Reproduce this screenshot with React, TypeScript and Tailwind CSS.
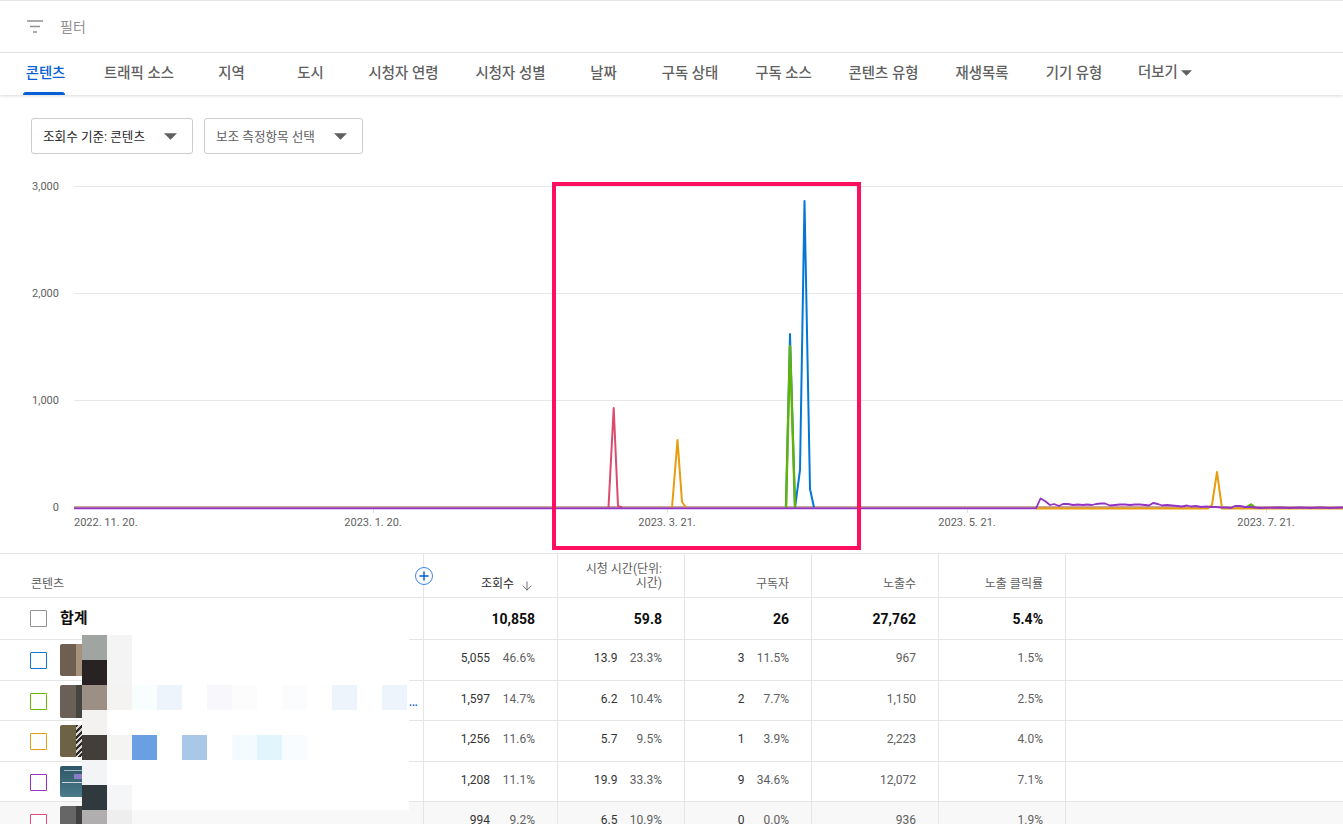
import { ArrowDown, Plus } from 'lucide-react';

const cjk = "font-['Roboto','Noto_Sans_CJK_KR',sans-serif]";

const tabs = [
  { label: '콘텐츠', width: 'w-[86px]' },
  { label: '트래픽 소스', width: 'w-[106px]' },
  { label: '지역', width: 'w-[79px]' },
  { label: '도시', width: 'w-[79px]' },
  { label: '시청자 연령', width: 'w-[107px]' },
  { label: '시청자 성별', width: 'w-[107px]' },
  { label: '날짜', width: 'w-[79px]' },
  { label: '구독 상태', width: 'w-[94px]' },
  { label: '구독 소스', width: 'w-[93px]' },
  { label: '콘텐츠 유형', width: 'w-[107px]' },
  { label: '재생목록', width: 'w-[90px]' },
  { label: '기기 유형', width: 'w-[94px]' },
];

const rows = [
  { h: 'h-[40px]', check: 'border-[#0f78d4]', thumb: 'bg-[#6e5f50]', thumb2: 'bg-[#a8917a]', thumbH: 'h-[32px]', v: ['5,055', '46.6%', '13.9', '23.3%', '3', '11.5%', '967', '1.5%'] },
  { h: 'h-[39px]', check: 'border-[#6cb800]', thumb: 'bg-[#6a6058]', thumb2: 'bg-[#45443f]', thumbH: 'h-[33px]', v: ['1,597', '14.7%', '6.2', '10.4%', '2', '7.7%', '1,150', '2.5%'] },
  { h: 'h-[40px]', check: 'border-[#e89a10]', thumb: 'bg-[#6d6244]', thumb2: 'bg-[repeating-linear-gradient(135deg,#2a2a2a_0_2px,#d8d4cc_2px_4px)]', thumbH: 'h-[32px]', v: ['1,256', '11.6%', '5.7', '9.5%', '1', '3.9%', '2,223', '4.0%'] },
  { h: 'h-[39px]', check: 'border-[#9b30c0]', thumb: 'bg-linear-to-b from-[#2f5666] to-[#4a7c8c]', thumb2: 'bg-linear-to-b from-[#2f5666] to-[#4a7c8c]', thumbH: 'h-[31px]', detail: true, v: ['1,208', '11.1%', '19.9', '33.3%', '9', '34.6%', '12,072', '7.1%'] },
  { h: 'h-[40px]', check: 'border-[#e0497a]', thumb: 'bg-[#666666]', thumb2: 'bg-[#414141]', thumbH: 'h-[32px]', v: ['994', '9.2%', '6.5', '10.9%', '0', '0.0%', '936', '1.9%'], hover: true },
];

// blur mosaic over the private titles, 13 x 8 blocks of 25px
const mosaic: Record<string, string> = {
  '0,0': '#a0a5a2', '1,0': '#282322', '2,0': '#9c8f86', '3,0': '#f3f2f0', '4,0': '#443e38', '5,0': '#f3f4f6', '6,0': '#303a3e', '7,0': '#b0aeaf',
  '0,1': '#f4f4f4', '1,1': '#f4f4f4', '2,1': '#f4f3f1', '4,1': '#f4f4f2', '6,1': '#f5f6f8', '7,1': '#eeeeee',
  '2,2': '#f8fdfe', '2,3': '#edf4fc', '2,5': '#f7f7fc', '2,6': '#fcfcfc', '2,8': '#fafcfe', '2,10': '#edf4fc', '2,12': '#edf4fc',
  '4,2': '#6b9fe3', '4,4': '#a9c8e8', '4,6': '#f4fbfe', '4,7': '#e1f5fc', '4,8': '#f9fcfe',
};

function Caret({ className }: { className: string }) {
  return (
    <svg viewBox="0 0 14 7" className={className}>
      <path d="M0 0h14L7 7z" fill="currentColor" />
    </svg>
  );
}

function Select({ label, width, text }: { label: string; width: string; text: string }) {
  return (
    <div className={`${width} h-9 flex items-center justify-between pl-[11px] pr-[15px] border border-[#cccccc] rounded-[3px] text-[12.6px] ${text}`}>
      <span className="pt-[2px]">{label}</span>
      <Caret className="w-[13px] h-[7px] text-[#606060]" />
    </div>
  );
}

function Chart() {
  const grid = [186, 293, 400, 507];
  const yLabels = ['3,000', '2,000', '1,000', '0'];
  const xLabels = [
    { x: 667, t: '2023. 3. 21.' },
    { x: 373, t: '2023. 1. 20.' },
    { x: 967, t: '2023. 5. 21.' },
    { x: 1266, t: '2023. 7. 21.' },
  ];
  return (
    <svg width="1343" height="373" viewBox="0 180 1343 373" className="block" fontFamily="Roboto, sans-serif" fontSize="11" fill="#606060">
      {grid.map((y, i) => (
        <g key={y}>
          <line x1="74" x2="1343" y1={y + 0.5} y2={y + 0.5} stroke="#e8e8e8" />
          <text x="59" y={y + 4} textAnchor="end">{yLabels[i]}</text>
        </g>
      ))}
      <text x="74" y="526">2022. 11. 20.</text>
      {xLabels.map((l) => (
        <g key={l.x}>
          <line x1={l.x + 0.5} x2={l.x + 0.5} y1="508" y2="513" stroke="#e0e0e0" />
          <text x={l.x} y="526" textAnchor="middle">{l.t}</text>
        </g>
      ))}
      <g fill="none" strokeWidth="2" strokeLinejoin="round">
        <path d="M74 507H1343" stroke="#b88a78" strokeWidth="1.4" />
        <path d="M786 507.5L790 334L795 507.5L800 470L804.5 201L810 489L814 507.5" stroke="#0477d4" />
        <path d="M786 507.5L790 346L795 507.5M1246 507.5L1251 504.5L1255 507.5" stroke="#5fb30a" strokeWidth="2.4" />
        <path d="M672 507.5L677.5 440L682 502L686 507.5M1036 508.5H1208L1212 505L1217 472L1222 508.5H1343" stroke="#e89c0e" />
        <path d="M608.5 507.5L613.7 408L618 506L622 507.5" stroke="#dc4a70" />
        <path
          d="M74 508.4H1036L1040.5 498.5L1045 501L1050 505L1054 504L1059 506L1063 504L1068 504L1073 505L1078 504.5L1083 505L1087 504.5L1092 505L1096 504L1101 503.5L1105 503.5L1110 505.5L1115 505L1120 504.5L1125 504.5L1130 505L1135 504.5L1140 504.5L1145 505L1149 505.5L1153 503L1158 504L1162 505.5L1167 505L1172 505.5L1177 506L1182 506.5L1187 505.5L1191 506.5L1196 506L1201 507L1206 506.5L1211 507L1216 507L1221 507.5L1226 507.5L1231 508L1235 506L1240 506L1245 507L1250 507L1255 507.5L1260 508L1280 507.5L1290 508L1300 507.5L1310 508L1320 507.5L1330 508L1343 507.5"
          stroke="#9233c6"
          strokeWidth="1.8"
        />
      </g>
    </svg>
  );
}

function NumCell({ a, b, width }: { a?: string; b: string; width: string }) {
  return (
    <div className={`${width} shrink-0 border-r border-[#e5e5e5] pr-[22px] pb-[4px] flex items-center justify-end`}>
      {a && <span className="text-[#333333] w-[60px] text-right">{a}</span>}
      <span className={`text-[#606060] text-right ${a ? 'w-[45px]' : ''}`}>{b}</span>
    </div>
  );
}

export default function App() {
  return (
    <div className={`relative w-[1343px] h-[824px] overflow-hidden bg-white ${cjk}`}>
      {/* Filter */}
      <div className="h-[53px] border-y border-[#e5e5e5] flex items-center pl-[27px] gap-[17px] text-sm text-[#909090]">
        <svg viewBox="0 0 16 13" className="w-4 h-[13px]" stroke="#909090" strokeWidth="1.5">
          <path d="M0 1h16M3 6.5h10M6 12h4" />
        </svg>
        <span>필터</span>
      </div>

      {/* Tabs */}
      <div className="h-[42px] flex shadow-[0_1px_3px_rgba(0,0,0,0.15)] text-[14.4px] text-[#606060] font-medium">
        {tabs.map((t, i) => (
          <div key={t.label} className={`${t.width} relative flex items-center justify-center ${i === 0 ? 'text-[#065fd4] pl-[5px]' : ''}`}>
            {t.label}
            {i === 0 && <div className="absolute left-[23px] bottom-0 w-[42px] h-[3px] rounded-t-sm bg-[#065fd4]" />}
          </div>
        ))}
        <div className="flex items-center gap-[3px] pl-[17px] pb-[3px]">
          더보기
          <Caret className="w-[11px] h-[6px] text-[#606060]" />
        </div>
      </div>

      {/* Metric selects */}
      <div className="flex gap-[11px] pl-[31px] pt-[23px]">
        <Select label="조회수 기준: 콘텐츠" width="w-[162px]" text="text-[#282828]" />
        <Select label="보조 측정항목 선택" width="w-[159px]" text="text-[#606060]" />
      </div>

      <div className="mt-[26px]">
        <Chart />
      </div>

      {/* Table */}
      <div className="border-t border-[#e5e5e5] text-xs">
        <div className="h-[44px] flex border-b border-[#e5e5e5] text-[#606060]">
          <div className="w-[424px] shrink-0 border-r border-[#e5e5e5] pl-[31px] pt-[22px]">콘텐츠</div>
          <div className="w-[134px] shrink-0 border-r border-[#e5e5e5] pr-[23px] pt-[22px] flex justify-end gap-[6px] text-[#282828]">
            조회수
            <ArrowDown className="w-[14px] h-[14px] mt-[3px] text-[#606060]" strokeWidth={1.5} />
          </div>
          <div className="w-[127px] shrink-0 border-r border-[#e5e5e5] pr-[22px] pt-[8px] text-right leading-[14px]">
            시청 시간(단위:<br />시간)
          </div>
          <div className="w-[127px] shrink-0 border-r border-[#e5e5e5] pr-[22px] pt-[22px] text-right">구독자</div>
          <div className="w-[127px] shrink-0 border-r border-[#e5e5e5] pr-[22px] pt-[22px] text-right">노출수</div>
          <div className="w-[127px] shrink-0 border-r border-[#e5e5e5] pr-[22px] pt-[22px] text-right">노출 클릭률</div>
        </div>

        <div className="h-[42px] flex border-b border-[#e5e5e5] text-sm font-bold text-[#0d0d0d]">
          <div className="w-[424px] shrink-0 border-r border-[#e5e5e5] pl-[30px] flex items-center gap-[13px]">
            <div className="w-[17px] h-[17px] border-[1.5px] border-[#909090] rounded-[1px]" />
            <span className="font-semibold text-[15px] pt-[1px]">합계</span>
          </div>
          {['10,858', '59.8', '26', '27,762', '5.4%'].map((v, i) => (
            <div key={v} className={`${i === 0 ? 'w-[134px]' : 'w-[127px]'} shrink-0 border-r border-[#e5e5e5] pr-[22px] flex items-center justify-end`}>{v}</div>
          ))}
        </div>

        {rows.map((r) => (
          <div key={r.v[0]} className={`${r.h} box-content flex border-b border-[#e5e5e5] ${r.hover ? 'bg-[#f8f8f8]' : ''}`}>
            <div className="w-[424px] shrink-0 border-r border-[#e5e5e5] pl-[30px] flex items-start gap-[13px] pt-[4px]">
              <div className={`w-[17px] h-[17px] mt-[8px] border-[1.5px] rounded-[1px] bg-white ${r.check}`} />
              <div className={`relative w-[58px] ${r.thumbH} shrink-0 flex rounded-[2px] overflow-hidden`}>
                <div className={`w-4 ${r.thumb}`} />
                <div className={`flex-1 ${r.thumb2}`} />
                {r.detail && (
                  <>
                    <div className="absolute left-[2px] top-[16px] w-5 h-px bg-[#c8d4d8]" />
                    <div className="absolute left-[14px] top-[8px] w-2 h-[5px] bg-[#8a7cc8]" />
                    <div className="absolute left-[4px] top-[4px] w-[18px] h-px bg-[#9cb8c2]" />
                  </>
                )}
              </div>
            </div>
            <NumCell a={r.v[0]} b={r.v[1]} width="w-[134px]" />
            <NumCell a={r.v[2]} b={r.v[3]} width="w-[127px]" />
            <NumCell a={r.v[4]} b={r.v[5]} width="w-[127px]" />
            <NumCell b={r.v[6]} width="w-[127px]" />
            <NumCell b={r.v[7]} width="w-[127px]" />
          </div>
        ))}
      </div>

      {/* Add column button */}
      <div className="absolute left-[415px] top-[567px] w-[18px] h-[18px] rounded-full border border-[#3f83e4] bg-white flex items-center justify-center">
        <Plus className="w-[14px] h-[14px] text-[#065fd4]" strokeWidth={2.5} />
      </div>

      {/* Truncated title tail that sticks out of the mosaic */}
      <div className="absolute left-[409px] top-[698px] text-[10px] leading-[10px] font-bold text-[#065fd4]">...</div>

      {/* Mosaic over titles */}
      <div className="absolute left-[82px] top-[635px] w-[327px] h-[175px] bg-white" />
      <div className="absolute left-[82px] top-[635px] grid grid-cols-[repeat(13,25px)] auto-rows-[25px]">
        {Array.from({ length: 8 * 13 }, (_, i) => {
          const c = mosaic[`${Math.floor(i / 13)},${i % 13}`];
          return <div key={i} style={c ? { backgroundColor: c } : undefined} />;
        })}
      </div>

      {/* Highlight box */}
      <div className="absolute left-[552px] top-[182px] w-[309px] h-[368px] border-4 border-[#ff0f5f]" />
    </div>
  );
}
